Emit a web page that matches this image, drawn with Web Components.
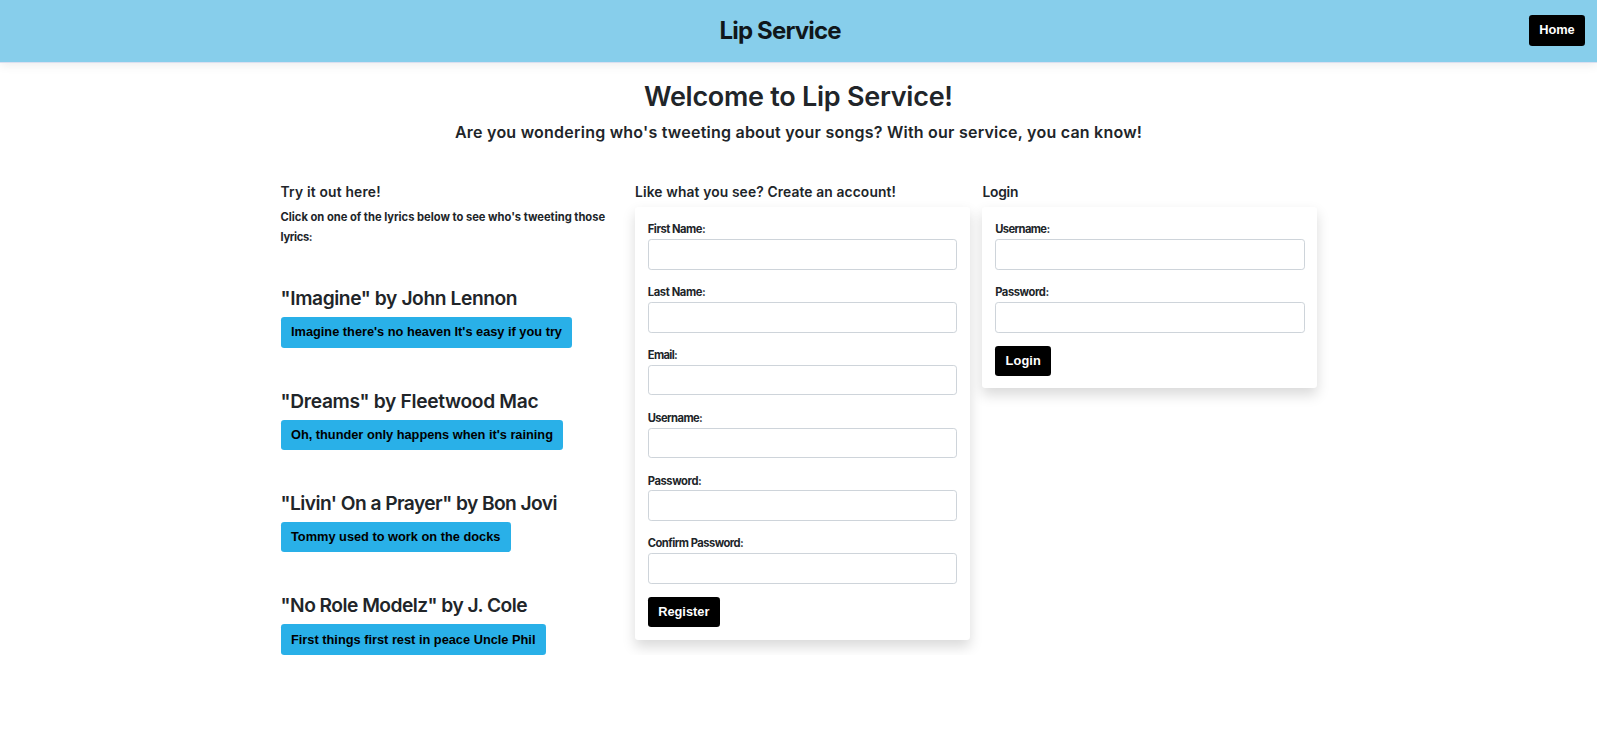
<!DOCTYPE html>
<html lang="en">
<head>
<meta charset="utf-8">
<title>Lip Service</title>
<style>
body{margin:0;background:#fff;color:#212529;font-family:Inter,"Noto Sans",sans-serif;overflow:hidden}
</style>
</head>
<body>
<lip-app></lip-app>
<script>
// Single line of text tracked to a given width in pixels.
class LipText extends HTMLElement{
  connectedCallback(){
    if(this.shadowRoot)return;
    this.attachShadow({mode:'open'}).innerHTML='<style>:host{display:block;white-space:nowrap}span{display:inline-block}</style><span><slot></slot></span>';
    const s=this.shadowRoot.querySelector('span'),w=parseFloat(this.getAttribute('width')),n=this.textContent.length;
    if(!w)return;
    const ls=(w-s.getBoundingClientRect().width)/(n-1);
    s.style.letterSpacing=ls+'px';
    s.style.marginRight=-ls+'px';
  }
}
class LipButton extends HTMLElement{
  constructor(){
    super();
    this.attachShadow({mode:'open'}).innerHTML=`<style>
      :host{display:block}
      button{display:block;box-sizing:border-box;height:30.4px;padding:0 10.4px;border:0;border-radius:3.2px;background:#000;color:#fff;font:bold 12.8px/30px "Liberation Sans",Arial,sans-serif;white-space:nowrap}
      :host([lyric]) button{background:#29b0e8;color:#000}
    </style><button type="button"><slot></slot></button>`;
  }
}
class LipHeader extends HTMLElement{
  constructor(){
    super();
    this.attachShadow({mode:'open'}).innerHTML=`<style>
      :host{display:grid;grid-template-columns:1fr auto 1fr;align-items:center;box-sizing:border-box;height:63px;padding:0 12px;background:#87ceeb;border-bottom:1px solid #dadff0;box-shadow:0 2px 10px rgba(0,0,0,.08)}
      .brand{grid-column:2;font-weight:700;font-size:24px;line-height:30px;color:#10171b;margin-right:36px}
      lip-button{justify-self:end;margin-top:-1px}
    </style><lip-text class="brand" width="122">Lip Service</lip-text><lip-button><lip-text width="35.4">Home</lip-text></lip-button>`;
  }
}
class LipSong extends HTMLElement{
  connectedCallback(){
    if(this.shadowRoot)return;
    const a=n=>this.getAttribute(n);
    this.attachShadow({mode:'open'}).innerHTML=`<style>
      :host{display:flex;flex-direction:column;align-items:flex-start;gap:7px}
      .title{font-weight:600;font-size:19.2px;line-height:24px}
    </style><div class="title"><lip-text width="${a('title-width')}">${this.textContent}</lip-text></div>
    <lip-button lyric><lip-text width="${a('lyric-width')}">${a('lyric')}</lip-text></lip-button>`;
  }
}
class LipField extends HTMLElement{
  connectedCallback(){
    if(this.shadowRoot)return;
    this.attachShadow({mode:'open'}).innerHTML=`<style>
      :host{display:block}
      lip-text{font-weight:700;font-size:11.2px;line-height:19.2px;position:relative;top:.5px}
      input{display:block;box-sizing:border-box;width:100%;height:30.6px;margin:0;border:1px solid #ced4da;border-radius:3.2px;background:#fff}
    </style><label><lip-text width="${this.getAttribute('width')}">${this.getAttribute('label')}</lip-text><input type="${this.getAttribute('type')||'text'}"></label>`;
  }
}
class LipCard extends HTMLElement{
  constructor(){
    super();
    this.attachShadow({mode:'open'}).innerHTML=`<style>
      :host{display:flex;flex-direction:column;align-items:stretch;gap:13px;padding:12.8px 12.8px 12.4px;background:#fff;border-radius:3.2px;box-shadow:0 6.4px 12.8px rgba(0,0,0,.15)}
      ::slotted(lip-button){align-self:flex-start}
    </style><slot></slot>`;
  }
}
class LipApp extends HTMLElement{
  constructor(){
    super();
    this.attachShadow({mode:'open'}).innerHTML=`<style>
      :host{display:block}
      header{text-align:center;padding-top:16.6px}
      .h1{font-weight:600;font-size:27px;line-height:34px}
      .sub{font-weight:600;font-size:16px;line-height:20px;margin-top:8.6px}
      main{display:grid;grid-template-columns:342px 335px 335px;column-gap:12.4px;justify-content:start;align-items:start;padding:41px 0 0 280.6px}
      .h{font-weight:600;font-size:13.8px;line-height:18px;margin-bottom:6px}
      .intro{font-weight:700;font-size:11.2px;line-height:20px}
      .songs{display:flex;flex-direction:column;gap:41px;margin-top:39px}
    </style>
    <lip-header></lip-header>
    <header><lip-text class="h1" width="309">Welcome to Lip Service!</lip-text>
    <lip-text class="sub" width="687">Are you wondering who's tweeting about your songs? With our service, you can know!</lip-text></header>
    <main>
      <section>
        <lip-text class="h" width="100">Try it out here!</lip-text>
        <lip-text class="intro" width="324.5">Click on one of the lyrics below to see who's tweeting those</lip-text>
        <lip-text class="intro" width="32">lyrics:</lip-text>
        <div class="songs">
          <lip-song title-width="237" lyric-width="271" lyric="Imagine there's no heaven It's easy if you try">"Imagine" by John Lennon</lip-song>
          <lip-song title-width="258" lyric-width="262" lyric="Oh, thunder only happens when it's raining">"Dreams" by Fleetwood Mac</lip-song>
          <lip-song title-width="277" lyric-width="209.4" lyric="Tommy used to work on the docks">"Livin' On a Prayer" by Bon Jovi</lip-song>
          <lip-song title-width="247" lyric-width="244.5" lyric="First things first rest in peace Uncle Phil">"No Role Modelz" by J. Cole</lip-song>
        </div>
      </section>
      <section>
        <lip-text class="h" width="261">Like what you see? Create an account!</lip-text>
        <lip-card>
          <lip-field label="First Name:" width="58"></lip-field>
          <lip-field label="Last Name:" width="58"></lip-field>
          <lip-field label="Email:" width="30"></lip-field>
          <lip-field label="Username:" width="55"></lip-field>
          <lip-field label="Password:" width="54" type="password"></lip-field>
          <lip-field label="Confirm Password:" width="96" type="password"></lip-field>
          <lip-button><lip-text width="51.2">Register</lip-text></lip-button>
        </lip-card>
      </section>
      <section>
        <lip-text class="h" width="36">Login</lip-text>
        <lip-card>
          <lip-field label="Username:" width="55"></lip-field>
          <lip-field label="Password:" width="54" type="password"></lip-field>
          <lip-button><lip-text width="35.2">Login</lip-text></lip-button>
        </lip-card>
      </section>
    </main>`;
  }
}
customElements.define('lip-text',LipText);
customElements.define('lip-button',LipButton);
customElements.define('lip-header',LipHeader);
customElements.define('lip-song',LipSong);
customElements.define('lip-field',LipField);
customElements.define('lip-card',LipCard);
customElements.define('lip-app',LipApp);
</script>
</body>
</html>
